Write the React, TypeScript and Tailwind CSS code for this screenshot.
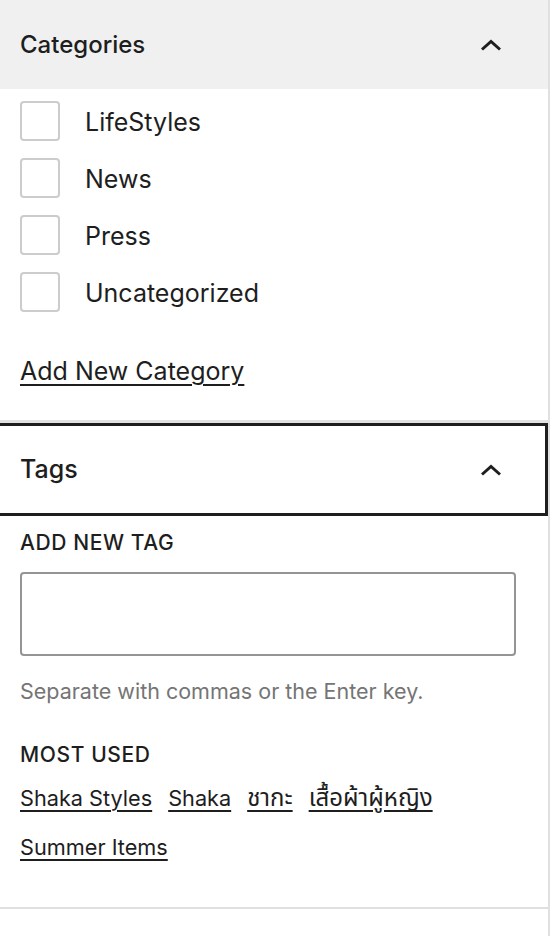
import React from "react";

const categories = ["LifeStyles", "News", "Press", "Uncategorized"];
const tags = [
  { name: "Shaka Styles", thai: false },
  { name: "Shaka", thai: false },
  { name: "ชากะ", thai: true },
  { name: "เสื้อผ้าผู้หญิง", thai: true },
  { name: "Summer Items", thai: false },
];

const Chevron: React.FC = () => (
  <svg width="22" height="12" viewBox="0 0 22 12" fill="none">
    <polyline points="2,10.5 11,2.5 20,10.5" stroke="#1e1e1e" strokeWidth="3" />
  </svg>
);

export default function App() {
  return (
    <div className="w-[554px] h-[936px] bg-white text-[#1e1e1e] font-['Inter','Noto_Sans','Noto_Sans_Thai','Tlwg_Typo',sans-serif]">
      <div className="w-[550px] h-full border-r-2 border-[#e0e0e0]">
        {/* Categorías */}
        <section>
          <div className="h-[89px] bg-[#f0f0f0] flex items-center justify-between pl-5 pr-[46px]">
            <h2 className="text-[24px] font-medium">Categories</h2>
            <Chevron />
          </div>
          <div className="flex flex-col gap-[17px] pt-3 pl-5">
            {categories.map((c) => (
              <label key={c} className="flex items-center gap-[25px] h-10">
                <span className="w-10 h-10 rounded-[4px] border-2 border-[#cccccc] bg-white" />
                <span className="text-[25px] mt-[3px]">{c}</span>
              </label>
            ))}
          </div>
          <div className="pl-5 mt-[43px] pb-[33px]">
            <a className="text-[25px] leading-8 underline underline-offset-[4px] decoration-[1.5px]">Add New Category</a>
          </div>
        </section>

        {/* Tags */}
        <section className="border-t-[3px] border-[#e0e0e0]">
          <div className="h-[93px] border-[3px] border-l-0 border-[#1e1e1e] flex items-center justify-between pl-5 pr-[43px]">
            <h2 className="text-[25px] font-medium">Tags</h2>
            <Chevron />
          </div>
          <div className="pl-5 pr-[33px] pt-[15px] pb-[35px] border-b-2 border-[#e0e0e0]">
            <div className="text-[21px] leading-6 font-medium uppercase tracking-[0.6px]">Add New Tag</div>
            <input className="mt-[17px] w-[496px] h-[84px] rounded-[4px] border-2 border-[#949494] bg-white outline-none" />
            <p className="mt-[21px] text-[21.5px] leading-7 text-[#757575]">Separate with commas or the Enter key.</p>
            <div className="mt-[38px] text-[21px] leading-6 font-medium uppercase tracking-[0.6px]">Most Used</div>
            <div className="mt-[6px] flex flex-wrap items-baseline gap-x-4 pr-20">
              {tags.map((t) => (
                <a
                  key={t.name}
                  className={
                    t.thai
                      ? "text-[24px] leading-[49px] underline underline-offset-[4px] decoration-[1.5px]"
                      : "text-[21.7px] leading-[49px] underline underline-offset-[4px] decoration-[1.5px]"
                  }
                >
                  {t.name}
                </a>
              ))}
            </div>
          </div>
        </section>
      </div>
    </div>
  );
}
